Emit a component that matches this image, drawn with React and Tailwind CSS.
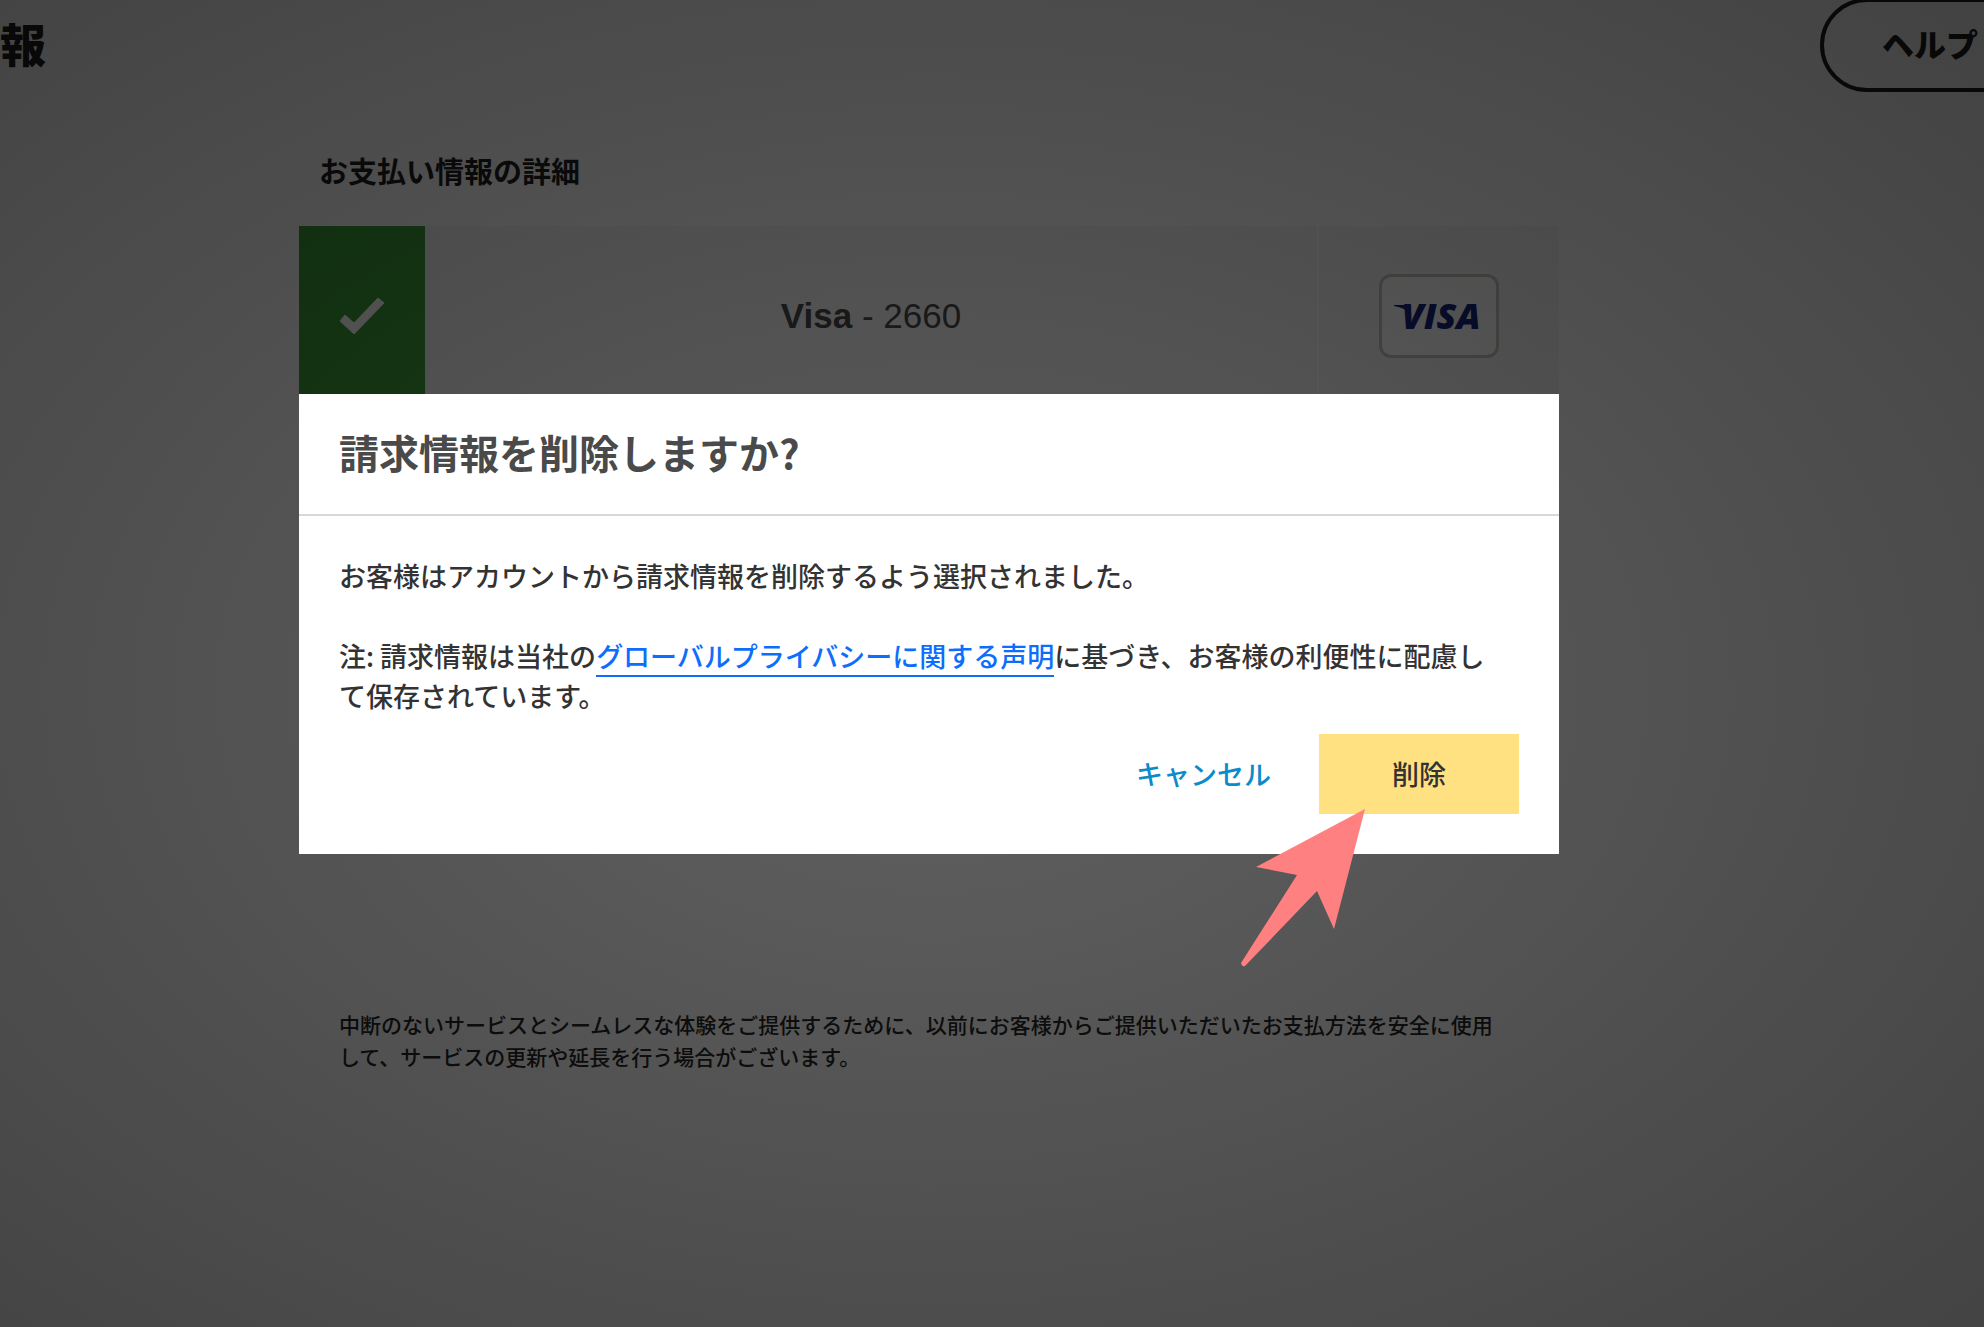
import React from 'react';

const CheckMark = () => (
  <svg viewBox="0 0 46 38" className="w-[46px] h-[38px]" aria-hidden="true">
    <path
      d="M1 24 L6 18 L15 26 L39 1 L45 6 L15 37 Z"
      fill="#fff"
      stroke="#fff"
      strokeWidth="1"
      strokeLinejoin="round"
    />
  </svg>
);

const VisaBadge = () => (
  <div className="relative flex items-center justify-center w-[120px] h-[84px] rounded-xl border-3 border-[#c6c6be] bg-white">
    <svg viewBox="0 0 16 8" className="absolute left-3 top-7 w-4 h-2" aria-hidden="true">
      <path d="M0 0 H13 L16 8 C12 4 6 2 0 1 Z" fill="#14247f" />
    </svg>
    <span className="pl-1 font-['Open_Sans',sans-serif] text-4xl leading-9 font-extrabold italic text-[#14247f]">
      VISA
    </span>
  </div>
);

const Pointer = () => (
  <svg
    viewBox="0 0 124 158"
    className="absolute right-[194px] -bottom-[113px] w-[124px] h-[158px] pointer-events-none"
    aria-hidden="true"
  >
    <path d="M124 0 L93 120 L76 82 L4 157 Q1 158 0 154 L56 66 L15 58 Z" fill="#ff8080" />
  </svg>
);

const Header = () => (
  <header className="flex items-start justify-between h-[92px] overflow-hidden">
    <h1 className="pt-3 text-[46px] leading-[60px] font-black text-[#1f1f1f]">報</h1>
    <button
      type="button"
      className="shrink-0 -mt-0.5 -mr-14 h-[94px] px-[58px] pb-1 rounded-full border-4 border-[#1f1f1f] text-[32px] font-black text-[#1f1f1f]"
    >
      ヘルプ
    </button>
  </header>
);

const PaymentMethod = () => (
  <div className="flex h-[180px] bg-[#f6f6f6]">
    <div className="flex items-center justify-center w-[126px] bg-[#3c9f39]">
      <CheckMark />
    </div>
    <p className="flex-1 flex items-center justify-center font-['Liberation_Sans',Arial,sans-serif] text-[35px] text-[#4a4a4a]">
      <span>
        <strong>Visa</strong> - 2660
      </span>
    </p>
    <div className="flex items-center justify-center w-[242px] border-l-2 border-white">
      <VisaBadge />
    </div>
  </div>
);

const DeleteDialog = () => (
  <div
    role="dialog"
    aria-modal="true"
    aria-labelledby="dialog-title"
    className="relative w-full max-w-[1260px] bg-white text-[27px] leading-10 font-medium text-[#333]"
  >
    <h2
      id="dialog-title"
      className="px-10 pt-[34px] pb-[38px] border-b-2 border-[#d8d8d8] text-[40px] leading-12 font-bold text-[#4a4a4a]"
    >
      請求情報を削除しますか?
    </h2>
    <div className="p-10">
      <p className="mb-10">お客様はアカウントから請求情報を削除するよう選択されました。</p>
      <p className="mb-[18px] pr-4">
        注: 請求情報は当社の
        <a href="#privacy" className="border-b-2 border-[#0d6efd] text-[#0d6efd]">
          グローバルプライバシーに関する声明
        </a>
        に基づき、お客様の利便性に配慮して保存されています。
      </p>
      <div className="flex justify-end">
        <button type="button" className="px-12 h-20 text-[#0a8bcb]">
          キャンセル
        </button>
        <button type="button" className="w-[200px] h-20 bg-[#ffe182] text-[#333]">
          削除
        </button>
      </div>
    </div>
    <Pointer />
  </div>
);

const App = () => (
  <div className="relative min-h-screen bg-white font-['Noto_Sans_CJK_JP',sans-serif]">
    <Header />
    <main className="pr-[126px]">
      <div className="mx-auto max-w-[1260px] pt-[58px]">
        <h2 className="px-5 mb-9 text-[29px] leading-10 font-bold text-[#1f1f1f]">
          お支払い情報の詳細
        </h2>
        <PaymentMethod />
        <p className="mt-[602px] pl-10 pr-14 text-[21px] leading-8 font-medium text-[#262626]">
          中断のないサービスとシームレスな体験をご提供するために、以前にお客様からご提供いただいたお支払方法を安全に使用して、サービスの更新や延長を行う場合がございます。
        </p>
      </div>
    </main>

    <div className="absolute inset-0 flex justify-center items-start pt-[394px] pr-[126px] bg-[radial-gradient(ellipse_at_47%_52%,rgba(0,0,0,0.62)_0%,rgba(0,0,0,0.74)_100%)]">
      <DeleteDialog />
    </div>
  </div>
);

export default App;
